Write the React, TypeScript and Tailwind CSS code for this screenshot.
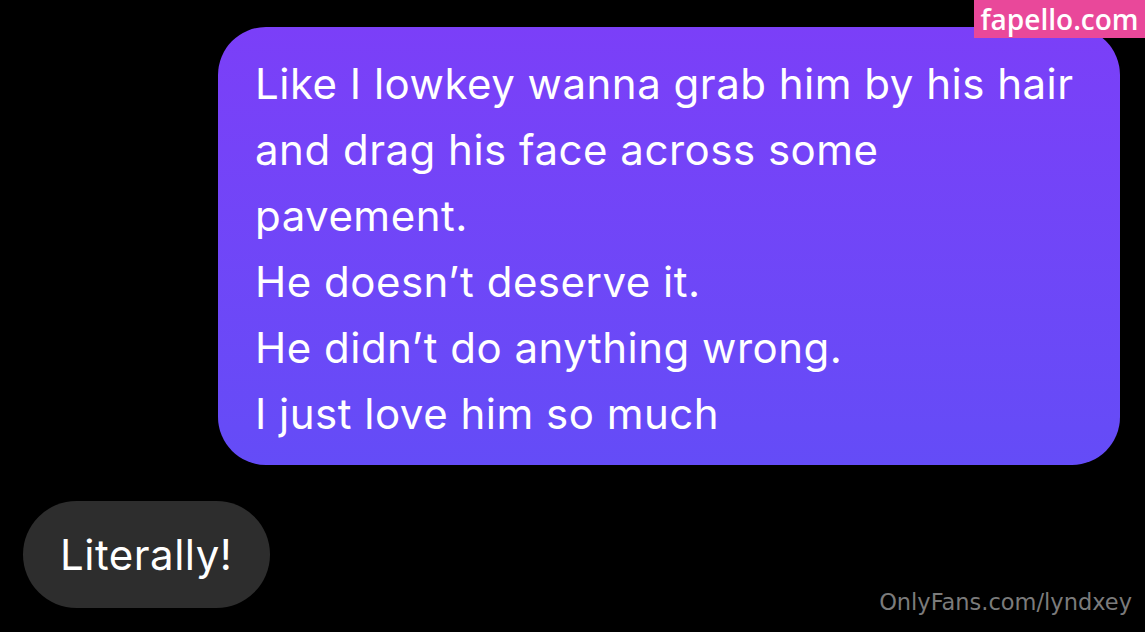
export default function App() {
  const lines = [
    "Like I lowkey wanna grab him by his hair",
    "and drag his face across some",
    "pavement.",
    "He doesn\u2019t deserve it.",
    "He didn\u2019t do anything wrong.",
    "I just love him so much",
  ];

  return (
    <div className="relative w-[1145px] h-[632px] overflow-hidden bg-black font-['Inter','Noto_Sans',sans-serif]">
      {/* chat */}
      <div className="flex flex-col pt-[27px]">
        <div className="ml-[218px] w-[902px] h-[438px] rounded-[48px] bg-gradient-to-b from-[#7b3ff8] to-[#644cf7] pl-[37px] pt-[24px] text-white">
          {lines.map((l) => (
            <div key={l} className="text-[42px] leading-[66px] tracking-[0.5px]">
              {l}
            </div>
          ))}
        </div>

        <div className="mt-[36px] ml-[23px] w-[247px] h-[107px] rounded-full bg-[#2d2d2d] flex items-center pl-[37px] text-white text-[42px] tracking-[0.5px]">
          Literally!
        </div>
      </div>

      {/* watermarks */}
      <div className="absolute top-0 right-0 w-[171px] h-[38px] bg-[#e9489a] flex items-center justify-center text-white text-[28px] font-['Open_Sans',sans-serif] font-semibold">
        fapello.com
      </div>
      <div className="absolute right-[13px] bottom-[12px] text-[#7b7b7b] text-[22.5px] font-['DejaVu_Sans',sans-serif]">
        OnlyFans.com/lyndxey
      </div>
    </div>
  );
}
